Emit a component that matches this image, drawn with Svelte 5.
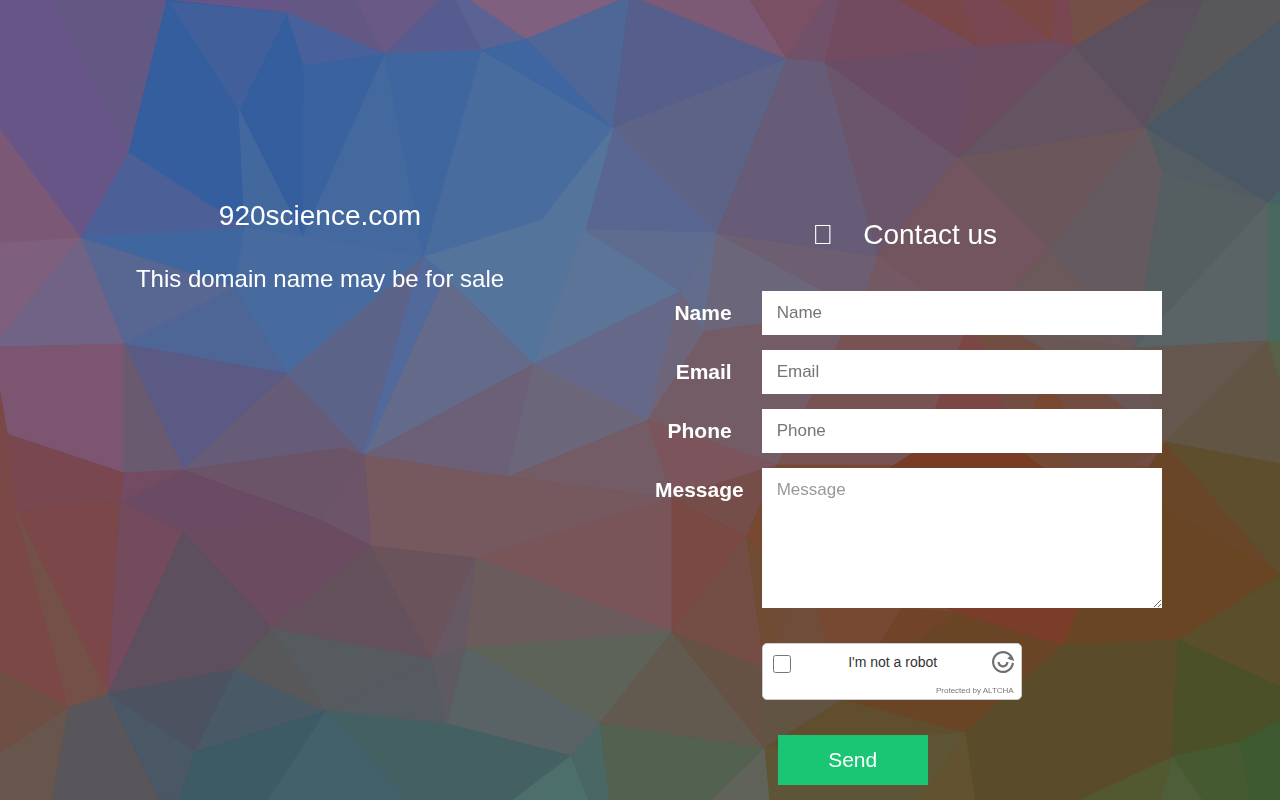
<script lang="ts">
	interface Facet {
		fill: string;
		points: string;
	}

	// low-poly backdrop, painted in order
	const facets: Facet[] = [
		{ fill: '#675587', points: '0,0 290,0 287,13 167,0 129,153 81,238 0,130' },
		{ fill: '#635783', points: '55,0 167,0 129,153' },
		{ fill: '#625883', points: '290,0 355,0 385,54 287,13' },
		{ fill: '#685987', points: '355,0 440,0 385,54' },
		{ fill: '#565c90', points: '440,0 456,0 482,50 385,54' },
		{ fill: '#5a6393', points: '456,0 470,0 527,39 482,50' },
		{ fill: '#7f607f', points: '470,0 620,0 527,39' },
		{ fill: '#355e9f', points: '167,0 287,13 304,66 303,237 245,228 129,153' },
		{ fill: '#41609b', points: '170,2 287,13 239,110' },
		{ fill: '#48609b', points: '287,13 385,54 304,66' },
		{ fill: '#3a629f', points: '304,66 385,54 303,237' },
		{ fill: '#43689e', points: '239,110 303,237 245,228' },
		{ fill: '#44699e', points: '385,54 424,257 303,237' },
		{ fill: '#4066a0', points: '385,54 482,50 424,257' },
		{ fill: '#496c9f', points: '482,50 613,128 542,220 424,257' },
		{ fill: '#3f66a0', points: '482,50 527,39 613,128' },
		{ fill: '#4f6797', points: '527,39 620,0 629,0 613,128' },
		{ fill: '#565e8b', points: '629,0 642,0 787,59 613,128' },
		{ fill: '#5c6387', points: '787,59 717,233 613,128' },
		{ fill: '#596692', points: '613,128 717,233 585,230' },
		{ fill: '#54749c', points: '613,128 585,230 534,364 424,257 542,220' },
		{ fill: '#5b7498', points: '585,230 681,291 534,364' },
		{ fill: '#4d5f97', points: '129,153 245,228 81,238' },
		{ fill: '#4066a0', points: '81,238 245,228 235,288' },
		{ fill: '#486b9f', points: '245,228 303,237 424,257 287,374 235,288' },
		{ fill: '#586692', points: '81,238 235,288 124,344' },
		{ fill: '#4e6696', points: '124,344 235,288 287,374' },
		{ fill: '#7b5976', points: '0,130 81,238 0,243' },
		{ fill: '#7e5f7d', points: '0,243 81,238 0,338' },
		{ fill: '#706386', points: '81,238 124,344 0,347 0,338' },
		{ fill: '#7c5670', points: '0,347 124,344 124,473 7,434 0,392' },
		{ fill: '#5b5a85', points: '124,344 287,374 183,470' },
		{ fill: '#695a70', points: '124,344 183,470 124,473' },
		{ fill: '#665c77', points: '287,374 364,455 343,448 183,470' },
		{ fill: '#5c6388', points: '424,257 364,455 287,374' },
		{ fill: '#646a89', points: '424,257 534,364 364,455' },
		{ fill: '#52699b', points: '416,278 424,257 446,275 364,455' },
		{ fill: '#6b6078', points: '364,455 534,364 507,477' },
		{ fill: '#6c667b', points: '534,364 648,420 507,477' },
		{ fill: '#656889', points: '534,364 681,291 648,420' },
		{ fill: '#6d667b', points: '681,291 704,332 648,420' },
		{ fill: '#5f6c90', points: '585,230 717,233 681,291' },
		{ fill: '#626c8d', points: '717,233 704,332 681,291' },
		{ fill: '#6c667b', points: '717,233 824,291 860,310 704,332' },
		{ fill: '#6d5f71', points: '717,233 878,256 860,310 824,291' },
		{ fill: '#745c66', points: '704,332 855,310 777,465 648,420' },
		{ fill: '#785353', points: '855,310 975,310 935,409 913,453 890,475 777,465' },
		{ fill: '#745c66', points: '507,477 648,420 672,498' },
		{ fill: '#75595f', points: '364,455 507,477 672,498 476,558 371,546' },
		{ fill: '#7b555b', points: '648,420 777,465 672,498' },
		{ fill: '#754e49', points: '672,498 777,465 747,537' },
		{ fill: '#79555a', points: '476,558 672,498 672,632' },
		{ fill: '#7a4943', points: '672,498 747,537 672,632' },
		{ fill: '#744e45', points: '747,537 765,670 672,632' },
		{ fill: '#6b5468', points: '183,470 343,448 364,455 320,520' },
		{ fill: '#6e5468', points: '364,455 371,546 320,520' },
		{ fill: '#6a4b63', points: '183,470 320,520 183,532 120,502' },
		{ fill: '#6a4b60', points: '183,532 320,520 371,546 272,628' },
		{ fill: '#734b63', points: '124,473 183,470 120,502' },
		{ fill: '#784750', points: '7,434 124,473 120,502 16,512' },
		{ fill: '#7b4847', points: '0,392 7,434 16,512 69,708 0,670' },
		{ fill: '#7b4748', points: '16,512 120,502 108,694' },
		{ fill: '#734b5c', points: '120,502 183,532 108,694' },
		{ fill: '#755048', points: '16,512 108,694 69,708' },
		{ fill: '#6f4f44', points: '0,670 69,708 0,753' },
		{ fill: '#68564c', points: '0,753 69,708 52,800 0,800' },
		{ fill: '#58565a', points: '69,708 108,694 160,800 52,800' },
		{ fill: '#5d4f5d', points: '183,532 272,628 236,669 108,694' },
		{ fill: '#4d5260', points: '108,694 236,669 195,752' },
		{ fill: '#4a5764', points: '108,694 195,752 180,800 160,800' },
		{ fill: '#4a5966', points: '236,669 326,711 195,752' },
		{ fill: '#58585a', points: '272,628 326,711 236,669' },
		{ fill: '#565b5f', points: '272,628 432,659 326,711' },
		{ fill: '#64515b', points: '371,546 432,659 272,628' },
		{ fill: '#6a535a', points: '371,546 476,558 432,659' },
		{ fill: '#665964', points: '476,558 466,648 432,659' },
		{ fill: '#565b61', points: '432,659 466,648 447,724 326,711' },
		{ fill: '#5d5a62', points: '432,659 466,648 447,724' },
		{ fill: '#6c5b5c', points: '476,558 672,632 466,648' },
		{ fill: '#5d6359', points: '466,648 672,632 600,723' },
		{ fill: '#596264', points: '466,648 600,723 571,756 447,724' },
		{ fill: '#3c5b64', points: '326,711 268,800 180,800 195,752' },
		{ fill: '#42616a', points: '326,711 408,800 268,800' },
		{ fill: '#456062', points: '326,711 447,724 571,756 513,800 408,800' },
		{ fill: '#4d6f6c', points: '571,756 589,800 513,800' },
		{ fill: '#4b6765', points: '571,756 600,723 610,800 589,800' },
		{ fill: '#526150', points: '600,723 765,748 712,800 610,800' },
		{ fill: '#62594f', points: '672,632 765,748 600,723' },
		{ fill: '#655244', points: '672,632 765,670 765,748' },
		{ fill: '#60635a', points: '765,748 770,800 712,800' },
		{ fill: '#7c5a75', points: '642,0 750,0 787,59' },
		{ fill: '#7a5064', points: '750,0 825,0 787,59' },
		{ fill: '#71506a', points: '825,0 840,0 825,62 787,59' },
		{ fill: '#734b60', points: '840,0 900,0 979,47 825,62' },
		{ fill: '#7a4748', points: '900,0 962,0 979,47' },
		{ fill: '#784752', points: '962,0 1000,0 1052,41 979,47' },
		{ fill: '#7b4745', points: '1000,0 1055,0 1052,41' },
		{ fill: '#784752', points: '1055,0 1069,0 1074,47 1052,41' },
		{ fill: '#744f48', points: '1069,0 1153,0 1074,47' },
		{ fill: '#5c4f5e', points: '1153,0 1204,0 1145,128 1074,47' },
		{ fill: '#58575a', points: '1204,0 1280,0 1280,21 1145,128' },
		{ fill: '#4a5866', points: '1145,128 1280,21 1280,190 1268,203' },
		{ fill: '#535b63', points: '1145,128 1268,203 1163,174' },
		{ fill: '#665c78', points: '787,59 825,62 878,256 717,233' },
		{ fill: '#6b556a', points: '825,62 958,158 878,256' },
		{ fill: '#6b4c65', points: '825,62 979,47 958,158' },
		{ fill: '#6b4c60', points: '979,47 1052,41 1074,47 958,158' },
		{ fill: '#645360', points: '958,158 1074,47 1145,128' },
		{ fill: '#6a565b', points: '958,158 1145,128 1050,250' },
		{ fill: '#73555f', points: '958,158 1050,250 975,330 878,256' },
		{ fill: '#745864', points: '878,256 975,330 860,310' },
		{ fill: '#6b5a59', points: '1050,250 1135,348 975,330' },
		{ fill: '#645a60', points: '1145,128 1163,174 1135,348 1050,250' },
		{ fill: '#555f62', points: '1163,174 1268,203 1135,348' },
		{ fill: '#5a6365', points: '1268,203 1268,342 1135,348' },
		{ fill: '#486365', points: '1268,203 1280,190 1280,205' },
		{ fill: '#4a685f', points: '1268,203 1280,205 1280,343 1268,342' },
		{ fill: '#6a5856', points: '975,325 1135,348 1165,442' },
		{ fill: '#65574d', points: '1135,348 1268,341 1165,442' },
		{ fill: '#615644', points: '1268,341 1280,380 1280,464 1165,442' },
		{ fill: '#596248', points: '1268,341 1280,343 1280,380' },
		{ fill: '#724d42', points: '975,310 1045,350 1107,394 1165,442 1150,480 920,480 935,409' },
		{ fill: '#784930', points: '1047,370 1063,409 1034,409' },
		{ fill: '#7a4745', points: '972,315 1004,409 935,409' },
		{ fill: '#774832', points: '777,465 1160,466 1160,620 900,680 765,670 747,537' },
		{ fill: '#793c24', points: '913,453 1025,453 1050,472 884,472' },
		{ fill: '#754a35', points: '1025,453 1069,453 1071,470 1047,470' },
		{ fill: '#704b3c', points: '1069,453 1152,453 1123,470 1071,470' },
		{ fill: '#6a4628', points: '1165,442 1280,575 1162,520 1147,470' },
		{ fill: '#5f4e2e', points: '1165,442 1280,464 1280,575' },
		{ fill: '#694524', points: '1160,504 1280,575 1178,640 1063,645 1078,600' },
		{ fill: '#704c34', points: '747,537 800,600 775,650 765,670' },
		{ fill: '#704d3b', points: '793,600 815,600 827,650 775,650' },
		{ fill: '#714429', points: '902,608 955,612 915,643 880,643' },
		{ fill: '#694525', points: '955,612 1063,645 965,733 840,700 880,643 915,643' },
		{ fill: '#7a3d29', points: '940,605 1078,605 1063,645 955,612' },
		{ fill: '#5a4c2a', points: '1063,645 1178,640 1172,757 1080,800 975,800 965,733' },
		{ fill: '#5b4e2a', points: '1178,640 1280,575 1280,687' },
		{ fill: '#4b5028', points: '1178,640 1280,687 1280,720 1240,742 1172,757' },
		{ fill: '#3d5a31', points: '1240,742 1280,720 1280,800 1250,800' },
		{ fill: '#455a30', points: '1172,757 1240,742 1250,800 1202,800' },
		{ fill: '#4e5e38', points: '1172,757 1202,800 1160,800' },
		{ fill: '#52582f', points: '1172,757 1160,800 1080,800' },
		{ fill: '#615442', points: '765,668 842,700 765,748' },
		{ fill: '#614e2f', points: '842,700 965,733 765,748' },
		{ fill: '#5d5535', points: '765,748 965,733 920,800 770,800' },
		{ fill: '#62522f', points: '965,733 975,800 920,800' }
	];

	const fields = ['Name', 'Email', 'Phone'];

	let values: Record<string, string> = $state({ Name: '', Email: '', Phone: '' });
	let message = $state('');
	let verified = $state(false);
</script>

<svg class="backdrop" viewBox="0 0 1280 800" preserveAspectRatio="xMidYMid slice" aria-hidden="true">
	{#each facets as facet}
		<polygon points={facet.points} fill={facet.fill} stroke={facet.fill} />
	{/each}
</svg>

<main>
	<section class="domain">
		<h1>920science.com</h1>
		<h2>This domain name may be for sale</h2>
	</section>

	<section class="contact">
		<h3><span class="icon" aria-hidden="true">&#xf0e0;</span>Contact us</h3>

		<form onsubmit={(e) => e.preventDefault()}>
			{#each fields as field}
				<div class="row">
					<label for={field}>{field}</label>
					<input
						class="control"
						id={field}
						type={field === 'Email' ? 'email' : 'text'}
						placeholder={field}
						bind:value={values[field]}
					/>
				</div>
			{/each}
			<div class="row">
				<label for="Message">Message</label>
				<textarea class="control" id="Message" placeholder="Message" bind:value={message}></textarea>
			</div>

			<div class="row">
				<div class="actions">
					<div class="captcha">
						<div class="check">
							<input id="robot" type="checkbox" bind:checked={verified} />
							<label for="robot">I'm not a robot</label>
							<svg class="logo" width="22" height="22" viewBox="0 0 20 20" fill="currentColor" aria-hidden="true">
								<path d="M2.34 16.43C5.89 20.66 12.2 21.21 16.43 17.66C18.47 15.95 19.65 13.59 19.94 11.14L17.99 10.43C17.87 12.56 16.91 14.65 15.14 16.13C11.76 18.97 6.71 18.53 3.87 15.14C1.03 11.76 1.47 6.71 4.86 3.87C8.24 1.03 13.29 1.47 16.13 4.86L13.83 6.79L19.96 9.13C19.79 7.16 19.03 5.21 17.66 3.57C14.11 -.66 7.8 -1.21 3.57 2.34C-.66 5.89 -1.21 12.2 2.34 16.43Z" />
								<path d="M7 10H5C5 12.76 7.24 15 10 15C12.76 15 15 12.76 15 10H13C13 11.66 11.66 13 10 13C8.34 13 7 11.66 7 10Z" />
							</svg>
						</div>
						<div class="protected">Protected by <a href="#altcha">ALTCHA</a></div>
					</div>
					<button type="submit">Send</button>
				</div>
			</div>
		</form>
	</section>
</main>

<style>
	:global(body) {
		margin: 0;
		background: #6a5560;
		font-family: 'Liberation Sans', Arial, sans-serif;
		color: #fff;
	}
	.backdrop {
		position: fixed;
		inset: 0;
		z-index: -1;
		width: 100%;
		height: 100%;
	}
	main {
		display: grid;
		grid-template-columns: 1fr 1fr;
	}
	h1,
	h2,
	h3 {
		margin: 0;
		font-weight: 400;
		text-align: center;
	}
	h1,
	h3 {
		font-size: 28px;
		line-height: 32px;
	}
	h2 {
		margin-top: 33px;
		font-size: 24px;
		line-height: 28px;
	}
	.domain {
		padding-top: 200px;
	}
	.contact {
		padding-top: 219px;
	}
	h3 {
		margin-right: calc(100% / 6 + 4px);
		margin-bottom: 40px;
	}
	.icon {
		margin-right: 30px;
	}
	form {
		display: flex;
		flex-direction: column;
		gap: 15px;
	}
	.row {
		display: grid;
		grid-template-columns: 1fr 5fr;
	}
	.row > label {
		padding: 10px 15px;
		min-width: 0;
		font-size: 21px;
		font-weight: 700;
		line-height: 24px;
		text-align: right;
	}
	.control {
		box-sizing: border-box;
		width: calc(100% - 30px);
		max-width: 400px;
		height: 44px;
		margin: 0 15px;
		padding: 10px 15px;
		border: none;
		border-radius: 0;
		background: #fff;
		color: #333;
		font-family: inherit;
		font-size: 17px;
		line-height: 24px;
	}
	textarea.control {
		height: 140px;
		resize: both;
	}
	textarea::placeholder {
		color: #999;
	}
	.actions {
		grid-column: 2;
		padding: 20px 15px 15px;
	}
	.captcha {
		box-sizing: border-box;
		max-width: 260px;
		padding: 7px 7px 4px;
		border: 1px solid #cdcdcd;
		border-radius: 5px;
		background: #fff;
		color: #333;
	}
	.check {
		display: flex;
		align-items: center;
		height: 22px;
	}
	.check input {
		width: 18px;
		height: 18px;
		margin: 4px 3px 0;
	}
	.check label {
		flex: 1;
		font-size: 14px;
		line-height: 22px;
		text-align: center;
	}
	.logo {
		color: #707070;
	}
	.protected {
		margin-top: 14px;
		color: #777;
		font-size: 8px;
		line-height: 8px;
		text-align: right;
	}
	.protected a {
		color: inherit;
		text-decoration: none;
	}
	button {
		display: block;
		width: 150px;
		height: 50px;
		margin: 35px 16px 0;
		border: none;
		background: #1ac574;
		color: #fff;
		font-family: inherit;
		font-size: 21px;
	}
</style>
